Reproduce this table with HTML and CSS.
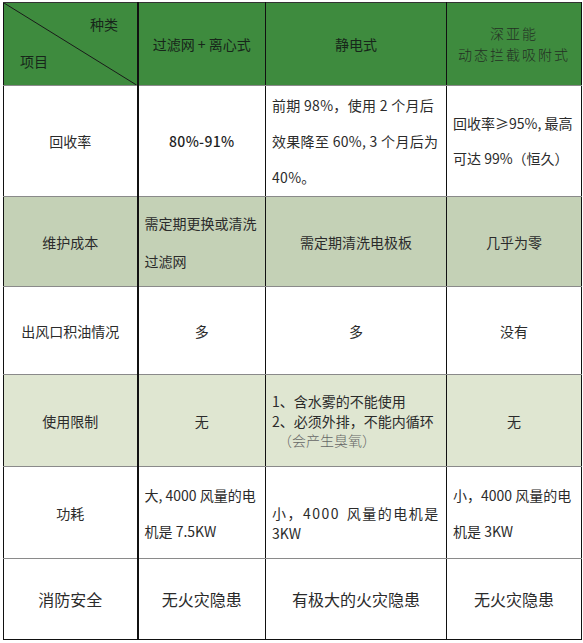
FILE: index.html
```html
<!DOCTYPE html>
<html lang="zh">
<head>
<meta charset="utf-8">
<link rel="stylesheet" href="styles.css">
</head>
<body>
<table class="cmp">
  <colgroup>
    <col class="c1"><col class="c2"><col class="c3"><col class="c4">
  </colgroup>
  <tr class="head">
    <td class="diag">
      <svg class="diag-line" viewBox="0 0 100 100" preserveAspectRatio="none"><line x1="0" y1="0" x2="100" y2="100" stroke="#1a1a1a" stroke-width="1" vector-effect="non-scaling-stroke"/></svg>
      <span class="kind">种类</span>
      <span class="item">项目</span>
    </td>
    <td class="ctr">过滤网 + 离心式</td>
    <td class="ctr">静电式</td>
    <td class="ctr serif">深亚能<br>动态拦截吸附式</td>
  </tr>
  <tr class="r1">
    <td class="ctr">回收率</td>
    <td class="ctr num">80%-91%</td>
    <td class="lft lh36 wide">前期 98%，使用 2 个月后<br>效果降至 60%, 3 个月后为<br>40%。</td>
    <td class="lft lh35">回收率≥95%, 最高<br>可达 99%（恒久）</td>
  </tr>
  <tr class="r2 tint-a">
    <td class="ctr">维护成本</td>
    <td class="lft lh38">需定期更换或清洗<br>过滤网</td>
    <td class="ctr">需定期清洗电极板</td>
    <td class="ctr">几乎为零</td>
  </tr>
  <tr class="r3">
    <td class="ctr">出风口积油情况</td>
    <td class="ctr">多</td>
    <td class="ctr">多</td>
    <td class="ctr">没有</td>
  </tr>
  <tr class="r4 tint-b">
    <td class="ctr">使用限制</td>
    <td class="ctr">无</td>
    <td class="lft list">
      <div class="li">1、含水雾的不能使用</div>
      <div class="li">2、必须外排，不能内循环</div>
      <div class="note">（会产生臭氧）</div>
    </td>
    <td class="ctr">无</td>
  </tr>
  <tr class="r5">
    <td class="ctr">功耗</td>
    <td class="lft lh36">大, 4000 风量的电<br>机是 7.5KW</td>
    <td class="lft spaced"><div class="sp1">小，4000 风量的电机是</div><div>3KW</div></td>
    <td class="lft lh36">小，4000 风量的电<br>机是 3KW</td>
  </tr>
  <tr class="r6">
    <td class="ctr big">消防安全</td>
    <td class="ctr big">无火灾隐患</td>
    <td class="ctr big">有极大的火灾隐患</td>
    <td class="ctr big">无火灾隐患</td>
  </tr>
</table>
</body>
</html>
```

FILE: styles.css
```css
html, body {
  margin: 0;
  padding: 0;
  background: #ffffff;
}
body {
  padding: 2px 0 0 3px;
  font-family: "Noto Sans CJK SC", "Noto Sans", sans-serif;
  font-size: 14px;
  color: #2b2b2b;
}
.cmp {
  border-collapse: collapse;
  table-layout: fixed;
  width: 578px;
}
.c1 { width: 134px; }
.c2 { width: 128px; }
.c3 { width: 181px; }
.c4 { width: 135px; }
.cmp td {
  border-top: 1px solid #8a8a8a;
  border-bottom: 1px solid #8a8a8a;
  border-left: 1px solid #111;
  border-right: 1px solid #111;
  padding: 0;
  vertical-align: middle;
  line-height: 20px;
}
.cmp tr td:first-child {
  border-left: 1px solid #111;
  border-right: 2px solid #111;
}
.cmp tr:first-child td { border-top: 1px solid #333; }
.cmp tr:last-child td { border-bottom: 1px solid #111; }

.head td {
  background: #3e8b3e;
  color: #17261a;
}
.head { height: 83px; }
.r1 { height: 111px; }
.r2 { height: 90px; }
.r3 { height: 88px; }
.r4 { height: 92px; }
.r5 { height: 92px; }
.r6 { height: 81px; }

.tint-a td { background: #c4d1b6; }
.tint-b td { background: #dfe6d1; }

.cmp td.ctr { text-align: center; }
.cmp td.lft { text-align: left; padding-left: 6px; }

.diag {
  position: relative;
}
.diag-line {
  position: absolute;
  left: 0;
  top: 0;
  width: 100%;
  height: 100%;
}
.kind {
  position: absolute;
  left: 86px;
  top: 11px;
}
.item {
  position: absolute;
  left: 16px;
  top: 48px;
}
.cmp td.serif {
  color: #243024;
  font-weight: 300;
  letter-spacing: 2px;
  line-height: 21px;
}
.cmp td.num { letter-spacing: 0.3px; color: #1f1f1f; font-weight: 500; }
.cmp td.lh35 { line-height: 35px; }
.cmp td.lh36 { line-height: 36px; }
.cmp td.lh38 { line-height: 38px; }
.cmp td.wide { letter-spacing: 0.3px; }
.list .li { line-height: 20px; }
.list .note {
  line-height: 19px;
  color: #666;
  font-weight: 300;
  padding-left: 6px;
}
.cmp td.spaced { padding-top: 20px; line-height: 20px; }
.sp1 { letter-spacing: 1.5px; word-spacing: 2px; }
.cmp td.big { font-size: 16px; }
```
